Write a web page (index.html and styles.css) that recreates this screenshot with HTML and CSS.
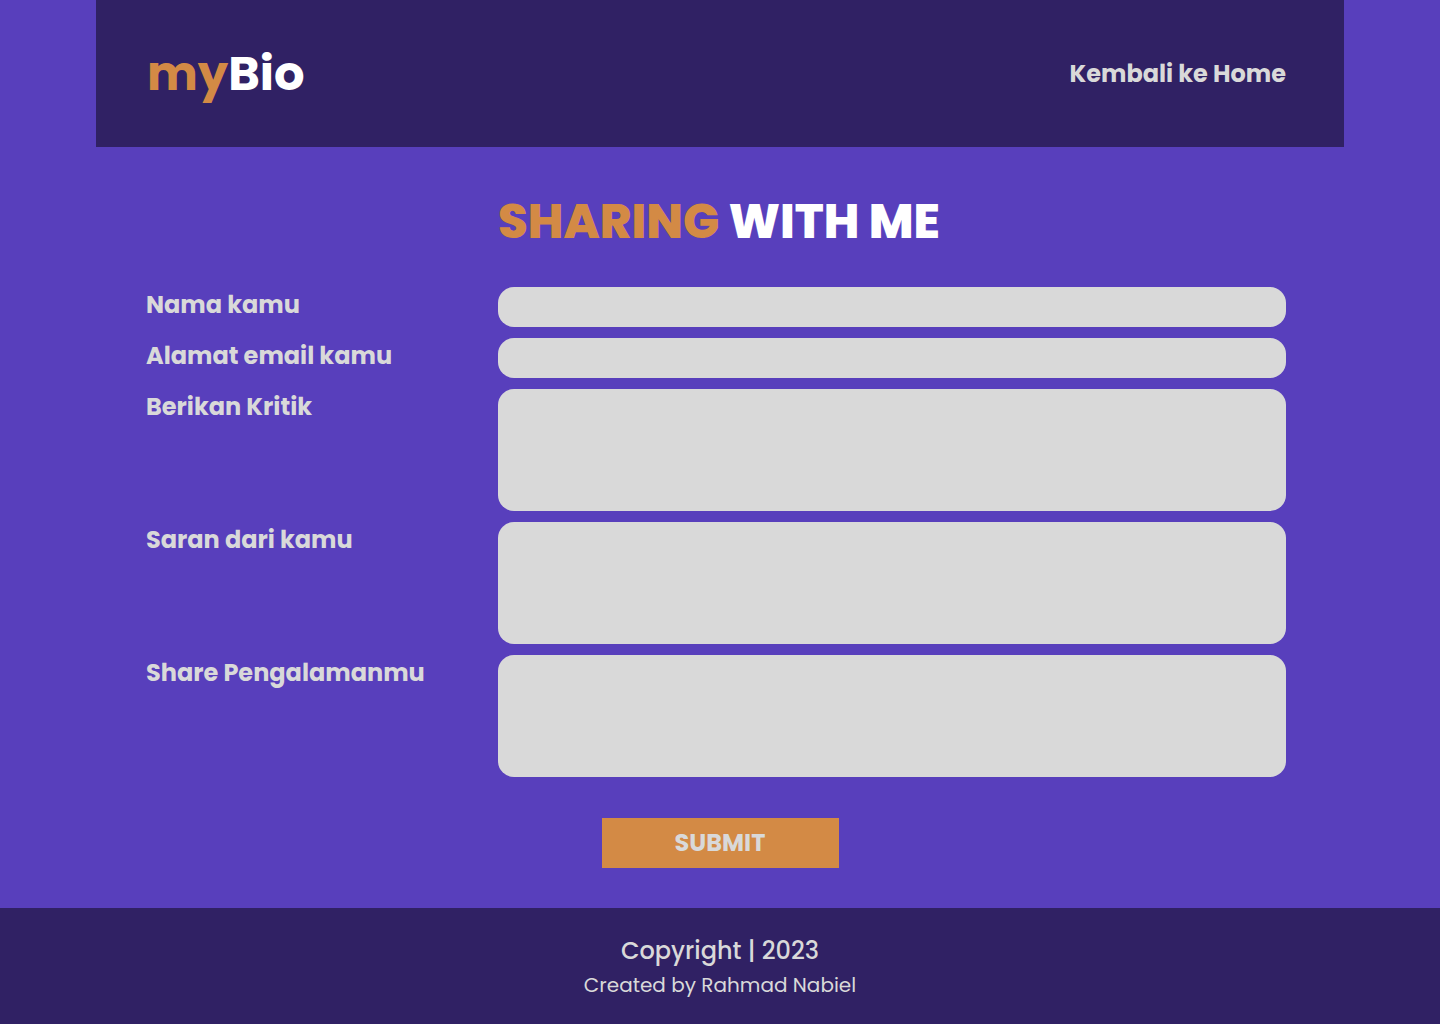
FILE: index.html
```html
<!DOCTYPE html>
<html lang="id">
<head>
<meta charset="utf-8">
<meta name="viewport" content="width=device-width, initial-scale=1">
<title>myBio</title>
<link rel="stylesheet" href="styles.css">
</head>
<body>
<header class="header">
  <div class="logo"><span class="accent">my</span>Bio</div>
  <a class="home-link" href="#">Kembali ke Home</a>
</header>
<main class="main">
  <h1 class="title"><span class="accent">SHARING</span> WITH ME</h1>
  <form class="form">
    <div class="fields">
      <div class="row">
        <label for="nama">Nama kamu</label>
        <input class="field" id="nama" type="text">
      </div>
      <div class="row">
        <label for="email">Alamat email kamu</label>
        <input class="field" id="email" type="email">
      </div>
      <div class="row">
        <label for="kritik">Berikan Kritik</label>
        <textarea class="field field-large" id="kritik"></textarea>
      </div>
      <div class="row">
        <label for="saran">Saran dari kamu</label>
        <textarea class="field field-large" id="saran"></textarea>
      </div>
      <div class="row">
        <label for="pengalaman">Share Pengalamanmu</label>
        <textarea class="field field-large" id="pengalaman"></textarea>
      </div>
    </div>
    <button class="submit" type="submit">SUBMIT</button>
  </form>
</main>
<footer class="footer">
  <p class="copyright">Copyright | 2023</p>
  <p class="author">Created by Rahmad Nabiel</p>
</footer>
</body>
</html>
```
FILE: styles.css
```css
* { box-sizing: border-box; }
body {
  margin: 0;
  min-height: 100vh;
  display: flex;
  flex-direction: column;
  background: #583fbc;
  color: #d9d9d9;
  font-family: Poppins, Inter, sans-serif;
}
.accent { color: #d38a45; }
.header {
  display: flex;
  align-items: center;
  justify-content: space-between;
  margin: 0 96px;
  padding: 38px 58px 37px 51px;
  background: #302164;
}
.logo {
  color: #fff;
  font-size: 48px;
  font-weight: 700;
  line-height: 72px;
}
.home-link {
  color: #d9d9d9;
  font-size: 24px;
  font-weight: 700;
  line-height: 36px;
  text-decoration: none;
}
.main {
  flex: 1;
  padding: 39px 0 40px;
}
.title {
  margin: 0 154px 29px 498px;
  color: #fff;
  font-size: 48px;
  font-weight: 800;
  line-height: 72px;
}
.form {
  display: flex;
  flex-direction: column;
  gap: 41px;
}
.fields {
  display: flex;
  flex-direction: column;
  gap: 11px;
  padding: 0 154px 0 146px;
}
.row {
  display: grid;
  grid-template-columns: 352px 1fr;
}
.row label {
  font-size: 24px;
  font-weight: 700;
  line-height: 36px;
}
.field {
  display: block;
  width: 100%;
  height: 40px;
  padding: 8px 16px;
  border: 0;
  border-radius: 16px;
  background: #d9d9d9;
  color: #302164;
  font: inherit;
}
.field-large {
  height: 122px;
  resize: none;
}
.submit {
  align-self: center;
  width: 237px;
  height: 50px;
  padding: 0 0 2px;
  border: 0;
  background: #d38a45;
  color: #d9d9d9;
  font: inherit;
  font-size: 24px;
  font-weight: 700;
}
.footer {
  padding: 25px 0 23px;
  background: #302164;
  text-align: center;
}
.footer p { margin: 0; }
.copyright {
  font-size: 24px;
  font-weight: 500;
  line-height: 36px;
}
.author {
  font-size: 20px;
  line-height: 32px;
}
```
